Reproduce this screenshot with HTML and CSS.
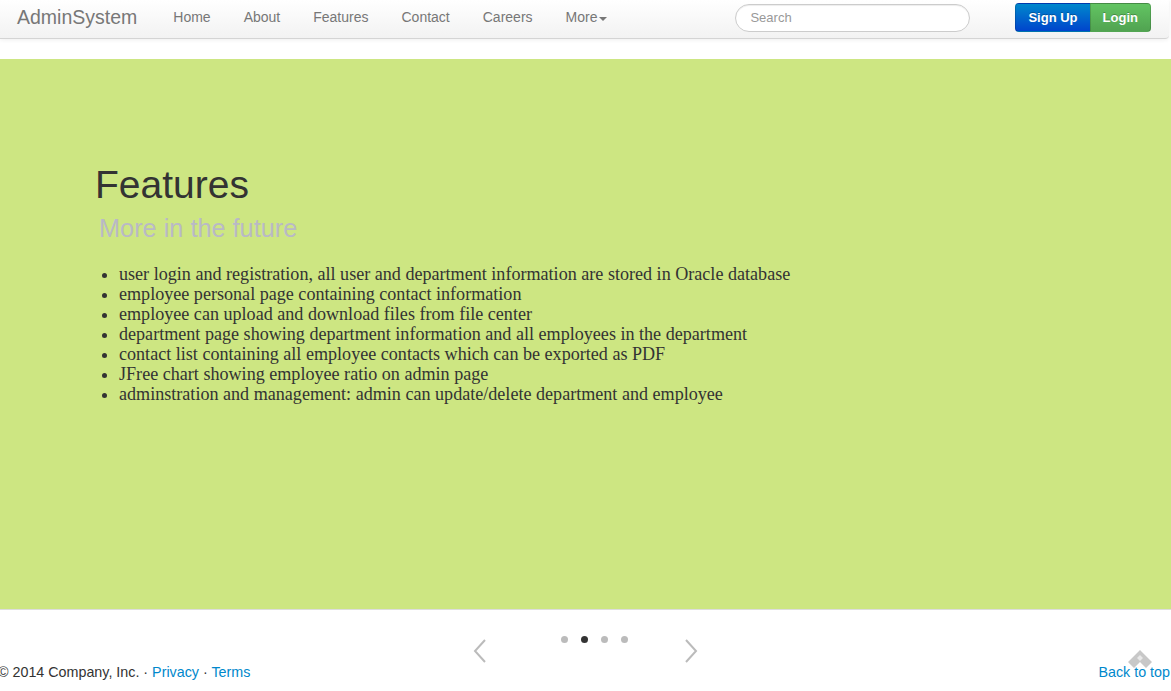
FILE: index.html
```html
<!DOCTYPE html>
<html>
<head>
<meta charset="utf-8">
<title>AdminSystem</title>
<link rel="stylesheet" href="styles.css">
</head>
<body>
<header class="navbar">
  <a class="brand" href="#">AdminSystem</a>
  <nav class="nav">
    <a href="#">Home</a>
    <a href="#">About</a>
    <a href="#">Features</a>
    <a href="#">Contact</a>
    <a href="#">Careers</a>
    <a href="#" class="dropdown">More<span class="caret"></span></a>
  </nav>
  <div class="search"><span class="placeholder">Search</span></div>
  <div class="btn-group">
    <a class="btn btn-primary" href="#">Sign Up</a>
    <a class="btn btn-success" href="#">Login</a>
  </div>
</header>

<section class="hero">
  <h1 class="hero-title">Features</h1>
  <h2 class="hero-sub">More in the future</h2>
  <ul class="feature-list">
    <li>user login and registration, all user and department information are stored in Oracle database</li>
    <li>employee personal page containing contact information</li>
    <li>employee can upload and download files from file center</li>
    <li>department page showing department information and all employees in the department</li>
    <li>contact list containing all employee contacts which can be exported as PDF</li>
    <li>JFree chart showing employee ratio on admin page</li>
    <li>adminstration and management: admin can update/delete department and employee</li>
  </ul>
</section>

<div class="controls">
  <svg class="chev chev-left" width="14" height="24" viewBox="0 0 14 24"><polyline points="12,1 2,12 12,23" fill="none" stroke="#bbb" stroke-width="2"/></svg>
  <div class="dots">
    <span class="dot"></span><span class="dot active"></span><span class="dot"></span><span class="dot"></span>
  </div>
  <svg class="chev chev-right" width="14" height="24" viewBox="0 0 14 24"><polyline points="2,1 12,12 2,23" fill="none" stroke="#bbb" stroke-width="2"/></svg>
</div>

<footer class="footer">
  <p class="copy">© 2014 Company, Inc. · <a href="#">Privacy</a> · <a href="#">Terms</a></p>
  <a class="top-link" href="#">Back to top</a>
  <svg class="top-icon" width="26" height="22" viewBox="0 0 26 22"><path d="M13 1 L25 13 L19 19 L13 13 L7 19 L1 13 Z" fill="#9a9a9a" fill-opacity="0.55" stroke-linejoin="round"/><path d="M13 6 L16 9 L13 12 L10 9 Z" fill="#fff" fill-opacity="0.6"/></svg>
</footer>
</body>
</html>
```

FILE: styles.css
```css
* { box-sizing: border-box; }
html, body { margin: 0; padding: 0; }
body {
  width: 1171px;
  height: 691px;
  overflow: hidden;
  font-family: "Liberation Sans", Arial, Helvetica, sans-serif;
  font-size: 14px;
  color: #333;
  background: #fff;
}
a { text-decoration: none; }

.navbar {
  height: 39px;
  display: flex;
  align-items: center;
  background: linear-gradient(#ffffff, #f2f2f2);
  border-bottom: 1px solid #d4d4d4;
  border-bottom-right-radius: 4px;
  box-shadow: 0 1px 4px rgba(0,0,0,0.065);
  margin-right: 2px;
}
.brand {
  font-size: 19.5px;
  color: #777;
  margin-left: 17px;
  line-height: 20px;
  margin-top: -4px;
}
.nav {
  display: flex;
  gap: 33px;
  margin-left: 36px;
  margin-top: -4px;
}
.nav a {
  color: #777;
  font-size: 14px;
  line-height: 20px;
}
.caret {
  display: inline-block;
  width: 0; height: 0;
  border-left: 4px solid transparent;
  border-right: 4px solid transparent;
  border-top: 4px solid #777;
  vertical-align: middle;
  margin-left: 2px;
  margin-top: 2px;
}
.search {
  margin-left: 128px;
  width: 235px;
  height: 28px;
  border: 1px solid #ccc;
  border-radius: 15px;
  background: #fff;
  box-shadow: inset 0 1px 1px rgba(0,0,0,0.075);
  display: flex;
  align-items: center;
  padding-left: 14px;
  margin-top: -3px;
}
.placeholder { color: #999; font-size: 13px; }
.btn-group {
  display: flex;
  margin-left: 45px;
  margin-top: -4px;
}
.btn {
  height: 29px;
  display: flex;
  align-items: center;
  padding: 0 12px;
  color: #fff;
  font-weight: bold;
  font-size: 13px;
  text-shadow: 0 -1px 0 rgba(0,0,0,0.25);
  border: 1px solid rgba(0,0,0,0.15);
}
.btn-primary {
  background: linear-gradient(#0088cc, #0044cc);
  border-radius: 4px 0 0 4px;
  border-right: 0;
}
.btn-success {
  background: linear-gradient(#62c462, #51a351);
  border-radius: 0 4px 4px 0;
}

.hero {
  margin-top: 20px;
  height: 551px;
  background: #cde682;
  border-bottom: 1px solid #ddd;
  padding: 104px 0 0 95px;
}
.hero-title {
  margin: 0;
  font-size: 39px;
  line-height: 43px;
  font-weight: normal;
  color: #333;
}
.hero-sub {
  margin: 7px 0 0 4px;
  font-size: 25.3px;
  line-height: 30px;
  font-weight: normal;
  color: #b9b9c6;
}
.feature-list {
  margin: 21px 0 0 0;
  padding-left: 24px;
  font-family: "Liberation Serif", "Times New Roman", serif;
  font-size: 18.1px;
  line-height: 20px;
  color: #333;
}

.controls {
  height: 52px;
  display: flex;
  justify-content: center;
  align-items: flex-start;
  padding-top: 26px;
}
.chev { display: block; margin-top: 3px; }
.dots {
  display: flex;
  gap: 13px;
  margin: 0 56px 0 74px;
}
.dot {
  width: 7px; height: 7px;
  border-radius: 50%;
  background: #bbb;
}
.dot.active { background: #333; }

.footer {
  position: relative;
  display: flex;
  justify-content: space-between;
  align-items: center;
  height: 20px;
  margin-left: -2px;
  padding-right: 1px;
}
.copy { margin: 0; font-size: 14.3px; line-height: 20px; color: #333; }
.copy a, .top-link { color: #0088cc; }
.top-link { font-size: 14.3px; line-height: 20px; }
.top-icon {
  position: absolute;
  right: 18px;
  top: -13px;
}
```
